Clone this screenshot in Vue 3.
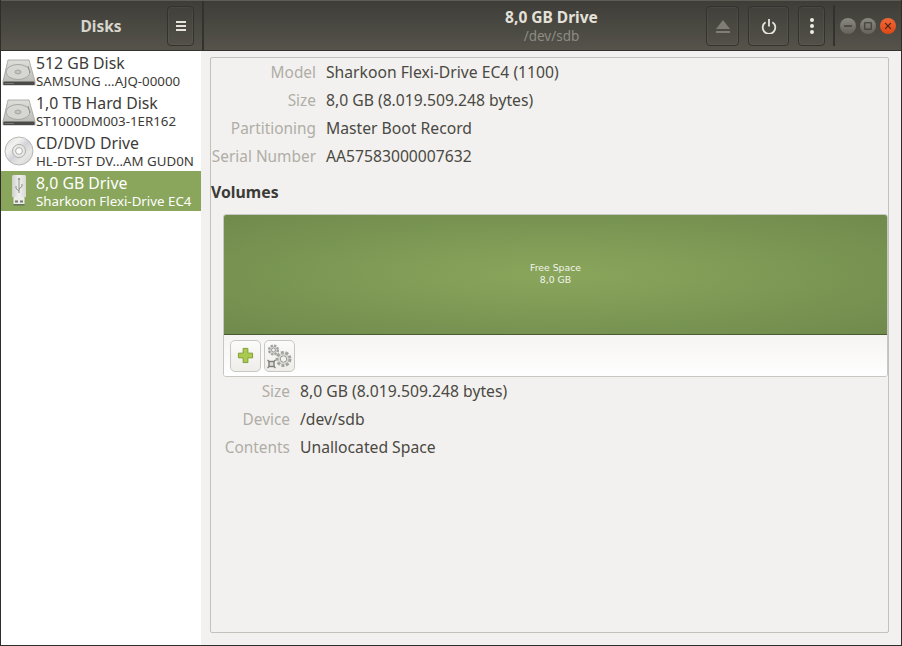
<script setup>
const disks = [
  { name: '512 GB Disk', sub: 'SAMSUNG …AJQ-00000', icon: 'hdd' },
  { name: '1,0 TB Hard Disk', sub: 'ST1000DM003-1ER162', icon: 'hdd' },
  { name: 'CD/DVD Drive', sub: 'HL-DT-ST DV…AM GUD0N', icon: 'cd' },
  { name: '8,0 GB Drive', sub: 'Sharkoon Flexi-Drive EC4', icon: 'usb', active: true },
]
const info = [
  ['Model', 'Sharkoon Flexi-Drive EC4 (1100)'],
  ['Size', '8,0 GB (8.019.509.248 bytes)'],
  ['Partitioning', 'Master Boot Record'],
  ['Serial Number', 'AA57583000007632'],
]
const vol = [
  ['Size', '8,0 GB (8.019.509.248 bytes)'],
  ['Device', '/dev/sdb'],
  ['Contents', 'Unallocated Space'],
]
</script>

<template>
  <div class="window">
    <header class="titlebar">
      <div class="side-head">
        <span class="app-title">Disks</span>
        <button class="hbtn menu-btn">
          <svg width="12" height="12" viewBox="0 0 12 12"><path d="M1 1h10v2H1zM1 5h10v2H1zM1 9h10v2H1z" fill="#e6e3dc"/></svg>
        </button>
      </div>
      <div class="main-head">
        <div class="head-center">
          <div class="drive-title">8,0 GB Drive</div>
          <div class="drive-sub">/dev/sdb</div>
        </div>
        <button class="hbtn eject">
          <svg width="16" height="16" viewBox="0 0 16 16"><path d="M8 2l7 9H1z" fill="#7f7d75"/><rect x="1" y="13" width="14" height="2" fill="#7f7d75"/></svg>
        </button>
        <button class="hbtn power">
          <svg width="16" height="16" viewBox="0 0 16 16" fill="none" stroke="#e8e5de" stroke-width="1.800"><path d="M8 1v7.500"/><path d="M4.600 4.200a6.300 6.300 0 1 0 6.800 0"/></svg>
        </button>
        <button class="hbtn dots">
          <svg width="6" height="18" viewBox="0 0 6 18" fill="#eeebe4"><circle cx="3" cy="3" r="2"/><circle cx="3" cy="9" r="2"/><circle cx="3" cy="15" r="2"/></svg>
        </button>
        <div class="wm">
          <span class="wm-btn"><svg width="10" height="10" viewBox="0 0 10 10"><path d="M0 5h10" stroke="#33322e" stroke-width="1.500"/></svg></span>
          <span class="wm-btn"><svg width="10" height="10" viewBox="0 0 10 10"><rect x="1" y="1" width="8" height="8" fill="none" stroke="#33322e" stroke-width="1.200"/></svg></span>
          <span class="wm-btn close"><svg width="10" height="10" viewBox="0 0 10 10"><path d="M1.500 1.500l7 7M8.500 1.500l-7 7" stroke="#4a2212" stroke-width="1.500"/></svg></span>
        </div>
      </div>
    </header>

    <div class="body">
      <aside class="sidebar">
        <div v-for="d in disks" :key="d.name" class="disk" :class="{ active: d.active }">
          <svg v-if="d.icon === 'hdd'" class="dicon" width="34" height="34" viewBox="0 0 34 34">
            <defs><linearGradient id="hd" x1="0" y1="0" x2="0" y2="1"><stop offset="0" stop-color="#dededb"/><stop offset="1" stop-color="#b8b8b4"/></linearGradient></defs>
            <path d="M6 6h21l6 21.500v3.500H1v-3.500z" fill="url(#hd)" stroke="#949490" stroke-width=".7"/>
            <ellipse cx="16" cy="18" rx="12" ry="7.500" fill="#d6d6d3" stroke="#a6a6a2"/>
            <ellipse cx="16" cy="18" rx="3" ry="2" fill="#c2c2be" stroke="#8f8f8b" stroke-width=".6"/>
            <path d="M26 12l2 7" stroke="#8f8f8b"/>
            <rect x="1.500" y="27.500" width="31" height="3.500" rx=".8" fill="#4a4a48"/>
            <rect x="3" y="29" width="9" height="1" fill="#77776f"/>
          </svg>
          <svg v-else-if="d.icon === 'cd'" class="dicon" width="34" height="34" viewBox="0 0 34 34">
            <defs><linearGradient id="cd" x1="0" y1="0" x2="1" y2="1"><stop offset="0" stop-color="#dcdcda"/><stop offset=".3" stop-color="#f2f2f0"/><stop offset=".5" stop-color="#d4d2da"/><stop offset=".7" stop-color="#e6e6e3"/><stop offset="1" stop-color="#d2d2ce"/></linearGradient></defs>
            <circle cx="17" cy="17" r="14" fill="url(#cd)" stroke="#a8a8a4" stroke-width=".8"/>
            <circle cx="17" cy="17" r="6.500" fill="#e9e9e7" stroke="#aeaeaa"/>
            <circle cx="17" cy="17" r="3.400" fill="#fafaf9" stroke="#9a9a96" stroke-width=".8"/>
          </svg>
          <svg v-else class="dicon" width="34" height="34" viewBox="0 0 34 34">
            <defs><linearGradient id="us" x1="0" y1="0" x2="1" y2="0"><stop offset="0" stop-color="#cfcfca"/><stop offset=".5" stop-color="#f0f0ed"/><stop offset="1" stop-color="#d8d8d3"/></linearGradient></defs>
            <path d="M11 1h12l1 1v21H10V2z" fill="url(#us)"/>
            <path d="M17 5v14M17 17l-3-2.500v-2.500M17 15l3-2.500V10" fill="none" stroke="#85857f" stroke-width=".9"/>
            <path d="M17 3.500l1.500 2h-3z" fill="#85857f"/>
            <rect x="11.500" y="23" width="11" height="7" fill="#ecece9"/>
            <rect x="13" y="26.500" width="3" height="2" fill="#77776f"/><rect x="18" y="26.500" width="3" height="2" fill="#77776f"/>
            <rect x="11.500" y="30" width="11" height="1.500" fill="#63735a"/>
          </svg>
          <div class="dtext">
            <div class="dname">{{ d.name }}</div>
            <div class="dsub">{{ d.sub }}</div>
          </div>
        </div>
      </aside>

      <main class="content">
        <section class="frame">
          <div class="props first">
            <template v-for="p in info" :key="p[0]">
              <div class="lbl">{{ p[0] }}</div>
              <div class="val">{{ p[1] }}</div>
            </template>
          </div>
          <h2 class="vol-title">Volumes</h2>
          <div class="volbox">
            <div class="grid-area">
              <div>Free Space</div>
              <div>8,0 GB</div>
            </div>
            <div class="toolbar">
              <button class="tbtn">
                <svg width="17" height="17" viewBox="0 0 18 18"><path d="M6.500 1.500h5v5h5v5h-5v5h-5v-5h-5v-5h5z" fill="#a9c94f" stroke="#7d9c2e" stroke-width="1"/></svg>
              </button>
              <button class="tbtn">
                <svg width="28" height="28" viewBox="0 0 28 28" fill="none" stroke="#a3a3a0">
                  <circle cx="7.500" cy="8" r="4.400" stroke-width="2.400" stroke-dasharray="2.300 1.150" fill="#d8d8d5"/>
                  <circle cx="7.500" cy="8" r="2" fill="#f0f0ee" stroke="#8a8a87" stroke-width=".8"/>
                  <circle cx="17.500" cy="17" r="6.500" stroke-width="3" stroke-dasharray="2.900 1.640" fill="#d8d8d5"/>
                  <circle cx="17.500" cy="17" r="3.200" fill="#f0f0ee" stroke="#8a8a87" stroke-width=".8"/>
                  <rect x="3" y="19.500" width="5" height="5" stroke="#7e7e7b" stroke-width="1.400" fill="#dcdcd8"/>
                  <path d="M1.500 18l1.500 1.500M9.500 18l-1.500 1.500M1.500 26l1.500-1.500M9.500 26l-1.500-1.500" stroke="#7e7e7b" stroke-width="1.200"/>
                </svg>
              </button>
            </div>
          </div>
          <div class="props second">
            <template v-for="p in vol" :key="p[0]">
              <div class="lbl">{{ p[0] }}</div>
              <div class="val">{{ p[1] }}</div>
            </template>
          </div>
        </section>
      </main>
    </div>
  </div>
</template>

<style scoped>
.window {
  width: 902px;
  height: 646px;
  box-sizing: border-box;
  border: 1px solid #2f2e2b;
  border-top: 0;
  background: #f2f1ef;
  display: flex;
  flex-direction: column;
  overflow: hidden;
  font-family: "Noto Sans", "Open Sans", sans-serif;
  color: #3c3b37;
}
.titlebar {
  height: 51px;
  flex: none;
  display: flex;
  box-sizing: border-box;
  background: linear-gradient(#3e3d38, #55534a);
  border-top: 1px solid #5e5c54;
  border-bottom: 1px solid #33322e;
}
.side-head {
  width: 203px;
  flex: none;
  display: flex;
  align-items: center;
  box-sizing: border-box;
  border-right: 2px solid #33322e;
}
.app-title {
  width: 166px;
  box-sizing: border-box;
  padding-left: 34px;
  text-align: center;
  font-weight: 700;
  font-size: 15.500px;
  color: #d8d5cd;
}
.hbtn {
  box-sizing: border-box;
  padding: 0;
  height: 40px;
  display: flex;
  align-items: center;
  justify-content: center;
  background: transparent;
  border: 1px solid #33322e;
  border-radius: 4px;
  box-shadow: inset 0 0 0 1px rgba(255, 255, 255, 0.04);
}
.menu-btn { width: 27px; }
.main-head {
  flex: 1;
  display: flex;
  align-items: center;
  padding-left: 502px;
  position: relative;
}
.head-center {
  position: absolute;
  left: 0;
  top: 7px;
  width: 695px;
  text-align: center;
  line-height: 19px;
}
.drive-title {
  font-weight: 700;
  font-size: 15.500px;
  color: #e4e1d9;
}
.drive-sub {
  font-size: 13.500px;
  color: #8e8c84;
}
.eject { width: 33px; margin-right: 9px; }
.power { width: 41px; margin-right: 9px; }
.dots { width: 27px; margin-right: 8px; }
.wm {
  height: 41px;
  display: flex;
  align-items: center;
  gap: 4px;
  padding-left: 5px;
  border-left: 2px solid #33322e;
}
.wm-btn {
  width: 16px;
  height: 16px;
  border-radius: 50%;
  background: linear-gradient(#8a8880, #64625b);
  display: flex;
  align-items: center;
  justify-content: center;
}
.wm-btn svg { width: 8px; height: 8px; }
.close { background: linear-gradient(#f0683a, #dd4814); }
.body {
  flex: 1;
  display: flex;
  min-height: 0;
}
.sidebar {
  width: 200px;
  flex: none;
  background: #fff;
}
.disk {
  height: 40px;
  display: flex;
  align-items: center;
  padding-left: 1px;
  box-sizing: border-box;
}
.disk.active { background: #8aa65c; color: #fff; }
.dicon { flex: none; }
.dname { font-size: 15.800px; line-height: 20px; }
.dsub { font-size: 13.300px; line-height: 17px; white-space: nowrap; }
.disk.active .dname, .disk.active .dsub { color: #fff; }
.content {
  flex: 1;
  padding: 6px 12px 12px 9px;
  min-width: 0;
  display: flex;
}
.frame {
  flex: 1;
  border: 1px solid #c3c1bc;
  border-radius: 2px;
  box-sizing: border-box;
}
.props {
  display: grid;
  grid-auto-rows: 28px;
  align-items: center;
  font-size: 15.700px;
}
.first { grid-template-columns: 105px 1fr; }
.second { grid-template-columns: 79px 1fr; }
.lbl { text-align: right; color: #b0ada6; white-space: nowrap; font-size: 15.400px; }
.val { padding-left: 10px; color: #4a4943; }
.vol-title {
  font-size: 15.800px;
  font-weight: 700;
  margin: 12px 0 12px 0;
  line-height: 20px;
  color: #3c3b37;
}
.volbox {
  margin: 0 0 0 12px;
  height: 163px;
  box-sizing: border-box;
  border: 1px solid #c9c7c2;
  border-radius: 3px;
  overflow: hidden;
  background: #fdfdfc;
  display: flex;
  flex-direction: column;
}
.grid-area {
  height: 120px;
  flex: none;
  box-sizing: border-box;
  border-bottom: 1px solid #4a5a32;
  padding-bottom: 2px;
  background: radial-gradient(ellipse at center, #8aa65c 0%, #6f8a4c 100%);
  color: #f2f4ec;
  font-family: "DejaVu Sans", sans-serif;
  font-size: 9.300px;
  line-height: 12px;
  text-align: center;
  display: flex;
  flex-direction: column;
  justify-content: center;
}
.toolbar {
  flex: 1;
  display: flex;
  align-items: center;
  gap: 3px;
  padding-left: 6px;
  background: linear-gradient(#f5f4f2, #fff);
}
.tbtn {
  width: 31px;
  height: 32px;
  padding: 0;
  box-sizing: border-box;
  border: 1px solid #c9c7c2;
  border-radius: 5px;
  background: linear-gradient(#fbfbfa, #eeedea);
  display: flex;
  align-items: center;
  justify-content: center;
}
</style>

<style>
html, body { margin: 0; padding: 0; background: #f2f1ef; }
</style>
